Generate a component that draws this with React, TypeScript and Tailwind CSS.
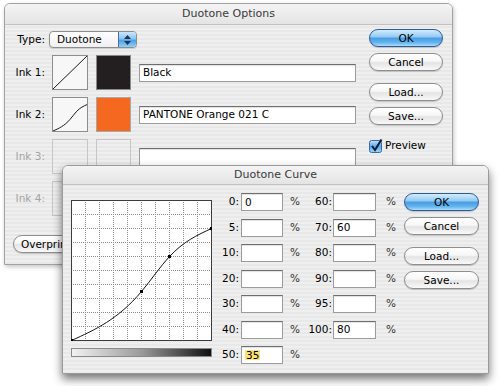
import React from "react";

const stripes =
  "bg-[repeating-linear-gradient(to_bottom,#efefef_0px,#efefef_2px,#e8e8e8_2px,#e8e8e8_4px)]";

function AquaButton({
  children,
  primary = false,
  className = "",
}: {
  children: React.ReactNode;
  primary?: boolean;
  className?: string;
}) {
  return (
    <div
      className={`h-[18px] rounded-full border flex items-center justify-center whitespace-nowrap overflow-hidden text-[10.5px] leading-none text-black shadow-[0_1px_1px_rgba(0,0,0,0.18)] ${
        primary
          ? "border-[#2d5b95] bg-[linear-gradient(to_bottom,#d4ecfd_0%,#93cbf4_42%,#4a9de4_52%,#63b3ee_78%,#a9defb_100%)]"
          : "border-[#8e8e8e] bg-[linear-gradient(to_bottom,#ffffff_0%,#f7f7f7_45%,#e4e4e4_55%,#f9f9f9_100%)]"
      } ${className}`}
    >
      {children}
    </div>
  );
}

function Field({
  value = "",
  className = "",
  highlight = false,
}: {
  value?: string;
  className?: string;
  highlight?: boolean;
}) {
  return (
    <div
      className={`bg-white border border-[#9c9c9c] border-t-[#6e6e6e] shadow-[inset_0_1px_1px_rgba(0,0,0,0.12)] flex items-center pl-[3px] text-[10.5px] leading-none text-black whitespace-nowrap ${className}`}
    >
      {highlight ? <span className="bg-[#fbe27c] px-[1px]">{value}</span> : value}
    </div>
  );
}

function CurveGraph() {
  const lines: React.ReactNode[] = [];
  for (let i = 1; i < 10; i++) {
    const p = i * 14 + 0.5;
    lines.push(<line key={"v" + i} x1={p} y1={0} x2={p} y2={141} />);
    lines.push(<line key={"h" + i} x1={0} y1={p} x2={141} y2={p} />);
  }
  const pts = [
    [0.5, 140.5],
    [70.5, 91.5],
    [98.5, 56.5],
    [140.5, 28.5],
  ];
  return (
    <svg width="141" height="141" className="block bg-white">
      <g stroke="#8c8c8c" strokeWidth="1" strokeDasharray="1 1">
        {lines}
      </g>
      <rect x="0.5" y="0.5" width="140" height="140" fill="none" stroke="#3c3c3c" />
      <path
        d="M0.5 140.5 C23.83 129.89 47.17 119.28 70.5 91.5 C79.83 80.4 89.17 66.54 98.5 56.5 C112.5 41.44 126.5 34.97 140.5 28.5"
        fill="none"
        stroke="#151515"
        strokeWidth="1"
      />
      {pts.map(([x, y], i) => (
        <rect key={i} x={x - 1.5} y={y - 1.5} width="3" height="3" fill="#000" />
      ))}
    </svg>
  );
}

function InkCurve({ kind }: { kind: "line" | "s" | "none" }) {
  return (
    <div
      className={`w-[36px] h-[35px] border ${
        kind === "none" ? "border-[#c6c6c6]" : "border-[#8d8d8d] bg-[#f7f7f7]"
      }`}
    >
      {kind !== "none" && (
        <svg width="34" height="33" className="block">
          {kind === "line" ? (
            <line x1="0" y1="33" x2="34" y2="0" stroke="#1a1a1a" strokeWidth="1" />
          ) : (
            <path
              d="M0 33 C5.67 30.5 11.33 28 17 21.45 C19.27 18.83 21.53 15.57 23.8 13.2 C27.2 9.65 30.6 8.13 34 6.6"
              fill="none"
              stroke="#1a1a1a"
              strokeWidth="1"
            />
          )}
        </svg>
      )}
    </div>
  );
}

function InkRow({
  label,
  kind,
  swatch,
  value,
  disabled = false,
}: {
  label: string;
  kind: "line" | "s" | "none";
  swatch: string;
  value?: string;
  disabled?: boolean;
}) {
  return (
    <div className="flex items-center h-[35px]">
      <div
        className={`w-[29px] flex justify-end whitespace-nowrap ${
          disabled ? "text-[#a4a4a4]" : "text-black"
        }`}
      >
        {label}
      </div>
      <div className="ml-[7px]">
        <InkCurve kind={kind} />
      </div>
      <div className={`ml-[8px] w-[35px] h-[35px] border ${swatch}`} />
      <Field value={value} className="ml-[8px] w-[217px] h-[18px]" />
    </div>
  );
}

export default function App() {
  const left = [
    ["0", "0"],
    ["5", ""],
    ["10", ""],
    ["20", ""],
    ["30", ""],
    ["40", ""],
    ["50", "35"],
  ];
  const right = [
    ["60", ""],
    ["70", "60"],
    ["80", ""],
    ["90", ""],
    ["95", ""],
    ["100", "80"],
  ];
  return (
    <div className="relative w-[500px] h-[386px] bg-white overflow-hidden font-['DejaVu_Sans',sans-serif] text-[10.5px] text-black">
      {/* Duotone Options */}
      <div
        className={`absolute left-[4px] top-[3px] w-[449px] h-[262px] rounded-t-[6px] border border-[#a2a2a2] ${stripes} shadow-[1px_2px_4px_rgba(0,0,0,0.22)] flex flex-col overflow-hidden`}
      >
        <div className="h-[21px] shrink-0 border-b border-[#c2c2c2] bg-[linear-gradient(to_bottom,#f4f4f4,#e4e4e4)] flex items-center justify-center text-[11px] text-[#3a3a3a]">
          Duotone Options
        </div>
        <div className="flex">
          <div className="flex flex-col pl-[11px] pt-[6px]">
            <div className="flex items-center h-[17px]">
              <div className="w-[29px] flex justify-end whitespace-nowrap">Type:</div>
              <div className="ml-[4px] w-[88px] h-[17px] rounded-[4px] border border-[#8d8d8d] bg-[linear-gradient(to_bottom,#ffffff,#efefef)] flex items-center overflow-hidden shadow-[0_1px_1px_rgba(0,0,0,0.15)]">
                <span className="pl-[7px] flex-1 leading-none">Duotone</span>
                <div className="w-[18px] h-full border-l border-[#3f6fa8] bg-[linear-gradient(to_bottom,#cce6fb_0%,#8cc5f1_45%,#4f9fe4_55%,#8fd0f8_100%)] flex flex-col items-center justify-center gap-[2px]">
                  <svg width="7" height="4" className="block">
                    <polygon points="3.5,0 7,4 0,4" fill="#1b3458" />
                  </svg>
                  <svg width="7" height="4" className="block">
                    <polygon points="0,0 7,0 3.5,4" fill="#1b3458" />
                  </svg>
                </div>
              </div>
            </div>
            <div className="flex flex-col gap-[7px] mt-[7px]">
              <InkRow label="Ink 1:" kind="line" swatch="bg-[#231f20] border-[#8a8a8a]" value="Black" />
              <InkRow
                label="Ink 2:"
                kind="s"
                swatch="bg-[#f4681f] border-[#a8a8a8]"
                value="PANTONE Orange 021 C"
              />
              <InkRow label="Ink 3:" kind="none" swatch="border-[#c6c6c6]" disabled />
              <InkRow label="Ink 4:" kind="none" swatch="border-[#c6c6c6]" disabled />
            </div>
            <AquaButton className="mt-[19px] -ml-[3px] w-[112px]">Overprint Colors...</AquaButton>
          </div>
          <div className="flex flex-col ml-[13px] pt-[4px] w-[74px]">
            <AquaButton primary>OK</AquaButton>
            <AquaButton className="mt-[6px]">Cancel</AquaButton>
            <AquaButton className="mt-[12px]">Load...</AquaButton>
            <AquaButton className="mt-[6px]">Save...</AquaButton>
            <div className="flex items-center mt-[13px]">
              <svg width="14" height="14" className="block">
                <defs>
                  <linearGradient id="cb" x1="0" y1="0" x2="0" y2="1">
                    <stop offset="0" stopColor="#c5e3fa" />
                    <stop offset="0.5" stopColor="#5ba8e8" />
                    <stop offset="1" stopColor="#9bd6fa" />
                  </linearGradient>
                </defs>
                <rect x="0.5" y="1.5" width="12" height="12" rx="2" fill="url(#cb)" stroke="#3b6aa3" />
                <path d="M3 7 L6 11 L12.5 0.5" fill="none" stroke="#0d1b33" strokeWidth="2" />
              </svg>
              <span className="ml-[2px]">Preview</span>
            </div>
          </div>
        </div>
      </div>

      {/* Duotone Curve */}
      <div
        className={`absolute left-[62px] top-[165px] w-[427px] h-[209px] rounded-t-[6px] border border-[#9a9a9a] ${stripes} shadow-[0_5px_10px_rgba(0,0,0,0.55)] flex flex-col overflow-hidden`}
      >
        <div className="h-[19px] shrink-0 border-b border-[#c2c2c2] bg-[linear-gradient(to_bottom,#f4f4f4,#e4e4e4)] flex items-center justify-center text-[11px] text-[#3a3a3a]">
          Duotone Curve
        </div>
        <div className="flex">
          <div className="flex flex-col pl-[8px] pt-[15px]">
            <CurveGraph />
            <div className="mt-[7px] w-[141px] h-[9px] border border-[#8a8a8a] bg-[linear-gradient(to_right,#f2f2f2,#9a9a9a_50%,#111111)]" />
          </div>
          <div className="flex flex-col gap-[7.5px] pt-[8px]">
            {left.map(([l, v], i) => (
              <div key={l} className="flex items-center h-[18px]">
                <span className="w-[27px] text-right">{l}:</span>
                <Field value={v} highlight={l === "50"} className="ml-[2px] w-[42px] h-[18px]" />
                <span className="ml-[7px] w-[10px] text-[#333]">%</span>
                {right[i] && (
                  <>
                    <span className="w-[32px] text-right">{right[i][0]}:</span>
                    <Field value={right[i][1]} className="ml-[1px] w-[43px] h-[18px]" />
                    <span className="ml-[10px] w-[10px] text-[#333]">%</span>
                  </>
                )}
              </div>
            ))}
          </div>
          <div className="flex flex-col ml-[8px] pt-[8px] w-[75px]">
            <AquaButton primary>OK</AquaButton>
            <AquaButton className="mt-[6px]">Cancel</AquaButton>
            <AquaButton className="mt-[12px]">Load...</AquaButton>
            <AquaButton className="mt-[6px]">Save...</AquaButton>
          </div>
        </div>
      </div>
    </div>
  );
}
